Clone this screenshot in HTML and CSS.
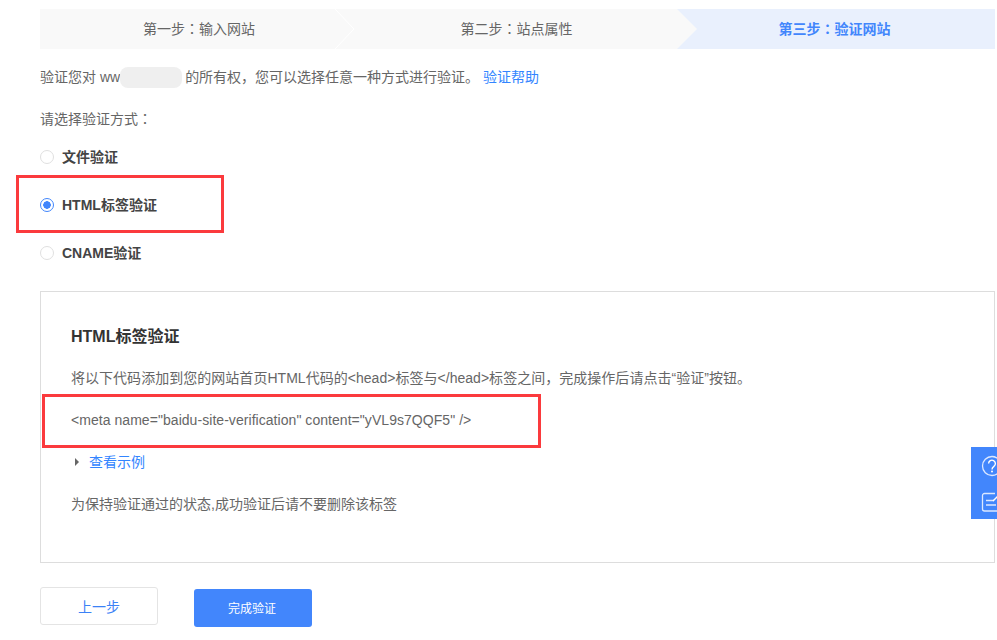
FILE: index.html
```html
<!DOCTYPE html>
<html lang="zh">
<head>
<meta charset="utf-8">
<title>验证网站</title>
<link rel="stylesheet" href="styles.css">
</head>
<body>
<main class="page">
  <div class="steps">
    <div class="step step-first">第一步<span class="colon" lang="zh-Hant">：</span>输入网站
      <svg class="chevron" width="20" height="40" viewBox="0 0 20 40"><path d="M0 0L19 20L0 40" fill="none" stroke="#fff" stroke-width="1"/></svg>
    </div>
    <div class="step">第二步<span class="colon" lang="zh-Hant">：</span>站点属性
      <svg class="arrow" width="20" height="40" viewBox="0 0 20 40"><path d="M0 0L20 20L0 40Z" fill="#f9f9f9"/></svg>
    </div>
    <div class="step step-active">第三步<span class="colon" lang="zh-Hant">：</span>验证网站</div>
  </div>

  <p class="intro">验证您对 ww<span class="masked"></span>的所有权，您可以选择任意一种方式进行验证。 <a class="link help" href="#">验证帮助</a></p>
  <p class="choose">请选择验证方式<span class="colon" lang="zh-Hant">：</span></p>

  <div class="options">
    <div class="option"><span class="radio"></span>文件验证</div>
    <div class="option"><span class="radio radio-on"></span>HTML标签验证<span class="mark mark-option"></span></div>
    <div class="option"><span class="radio"></span>CNAME验证</div>
  </div>

  <section class="panel">
    <h2 class="panel-title">HTML标签验证</h2>
    <p class="panel-desc">将以下代码添加到您的网站首页HTML代码的&lt;head&gt;标签与&lt;/head&gt;标签之间，完成操作后请点击“验证”按钮。</p>
    <div class="code">&lt;meta name="baidu-site-verification" content="yVL9s7QQF5" /&gt;<span class="mark mark-code"></span></div>
    <div class="example"><span class="caret"></span><a class="link" href="#">查看示例</a></div>
    <p class="keep">为保持验证通过的状态,成功验证后请不要删除该标签</p>
  </section>

  <div class="actions">
    <button class="btn btn-ghost" type="button">上一步</button>
    <button class="btn btn-primary" type="button">完成验证</button>
  </div>
</main>

<aside class="side">
  <svg width="26" height="26" viewBox="0 0 26 26"><circle cx="12" cy="11" r="9.5" fill="none" stroke="#dce8ff" stroke-width="1.3"/><path d="M8.6 8.6a3.4 3.4 0 1 1 5.3 2.8c-1.2.8-1.9 1.4-1.9 3" fill="none" stroke="#fff" stroke-width="1.4"/><circle cx="12" cy="16.6" r="1" fill="#fff"/></svg>
  <svg width="26" height="26" viewBox="0 0 26 26"><path d="M15 2.500H4.500a2 2 0 0 0-2 2V18a2 2 0 0 0 2 2H17a2 2 0 0 0 2-2v-6" fill="none" stroke="#dce8ff" stroke-width="1.300"/><path d="M6 9.500h8M6 14h10" stroke="#dce8ff" stroke-width="1.300"/><path d="M13 10l8-8" stroke="#fff" stroke-width="1.400"/></svg>
</aside>
</body>
</html>
```
FILE: styles.css
```css
* { box-sizing: border-box; }
html, body { margin: 0; padding: 0; }
body {
  width: 997px;
  height: 640px;
  overflow: hidden;
  position: relative;
  background: #fff;
  color: #666;
  font-family: "Liberation Sans", "Noto Sans CJK SC", sans-serif;
  font-size: 14px;
  line-height: 20px;
}
.page { padding: 9px 2px 0 40px; }
.link { color: #3385ff; text-decoration: none; }
.colon { font-family: "Noto Sans CJK TC", sans-serif; line-height: 0; }

.steps {
  display: grid;
  grid-template-columns: 318px 319px 318px;
  height: 40px;
}
.step {
  position: relative;
  padding-right: 2px;
  background: #f9f9f9;
  text-align: center;
  line-height: 40px;
  color: #666;
}
.step-first { padding-right: 0; }
.step-active { padding-right: 3px; background: #e9f0fd; color: #4286fc; font-weight: 700; }
.chevron { position: absolute; left: 295px; top: 0; }
.arrow { position: absolute; left: 319px; top: 0; z-index: 1; }

.intro { margin: 18px 0 0; height: 20px; position: relative; }
.masked {
  display: inline-block;
  width: 62px;
  height: 21px;
  margin-right: 3px;
  vertical-align: -6px;
  border-radius: 8px;
  background: #efefef;
}
.help { margin-left: 0; }
.choose { margin: 22px 0 0; }

.options { margin-top: 4px; }
.option {
  position: relative;
  display: flex;
  align-items: center;
  height: 48px;
  font-weight: 700;
  color: #444;
}
.radio {
  width: 14px;
  height: 14px;
  margin-right: 8px;
  border: 1px solid #e0e0e0;
  border-radius: 50%;
  background: #fff;
}
.radio-on {
  border-color: #4286fc;
  background: radial-gradient(circle, #4286fc 0 3.5px, #fff 4px);
}
.mark { position: absolute; border: 3px solid #fb3a3d; pointer-events: none; }
.mark-option { left: -24px; top: -6px; width: 208px; height: 58px; }

.panel {
  height: 272px;
  margin-top: 14px;
  padding: 33px 30px 0;
  border: 1px solid #ddd;
}
.panel-title { margin: 0; font-size: 16px; line-height: 24px; font-weight: 700; color: #333; }
.panel-desc { margin: 19px 0 0; white-space: nowrap; letter-spacing: 0.03px; }
.code { position: relative; margin-top: 22px; letter-spacing: 0.05px; }
.mark-code { left: -29px; top: -16px; width: 499px; height: 54px; }
.example { display: flex; align-items: center; margin-top: 22px; padding-left: 4px; }
.caret {
  width: 0;
  height: 0;
  margin-right: 10px;
  border-left: 4px solid #666;
  border-top: 4px solid transparent;
  border-bottom: 4px solid transparent;
}
.keep { margin: 22px 0 0; }

.actions { display: flex; gap: 36px; margin-top: 24px; }
.btn {
  width: 118px;
  height: 38px;
  padding: 1px 0 0;
  border-radius: 3px;
  font: inherit;
}
.btn-ghost { border: 1px solid #e4e4e4; background: #fff; color: #3b82f6; font-size: 14px; }
.btn-primary { padding-right: 2px; border: 0; background: #4286fc; color: #fff; margin-top: 2px; font-size: 12px; }

.side {
  position: absolute;
  left: 971px;
  top: 447px;
  width: 26px;
  height: 72px;
  padding: 8px 0 0 9px;
  background: #4286fc;
  overflow: hidden;
  display: flex;
  flex-direction: column;
  gap: 10px;
}
.side svg { flex: none; display: block; }
```
